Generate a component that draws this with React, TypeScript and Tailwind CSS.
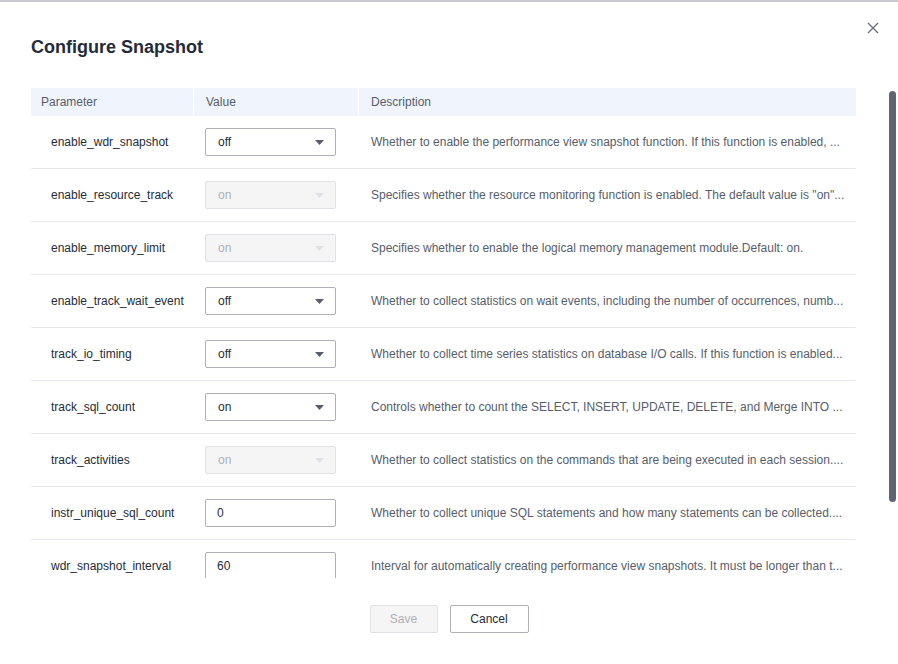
import React from 'react';

interface Param {
  name: string;
  kind: 'select' | 'input';
  value: string;
  disabled?: boolean;
  description: string;
}

const PARAMS: Param[] = [
  {
    name: 'enable_wdr_snapshot',
    kind: 'select',
    value: 'off',
    description: 'Whether to enable the performance view snapshot function. If this function is enabled, ...',
  },
  {
    name: 'enable_resource_track',
    kind: 'select',
    value: 'on',
    disabled: true,
    description: 'Specifies whether the resource monitoring function is enabled. The default value is "on"...',
  },
  {
    name: 'enable_memory_limit',
    kind: 'select',
    value: 'on',
    disabled: true,
    description: 'Specifies whether to enable the logical memory management module.Default: on.',
  },
  {
    name: 'enable_track_wait_event',
    kind: 'select',
    value: 'off',
    description: 'Whether to collect statistics on wait events, including the number of occurrences, numb...',
  },
  {
    name: 'track_io_timing',
    kind: 'select',
    value: 'off',
    description: 'Whether to collect time series statistics on database I/O calls. If this function is enabled...',
  },
  {
    name: 'track_sql_count',
    kind: 'select',
    value: 'on',
    description: 'Controls whether to count the SELECT, INSERT, UPDATE, DELETE, and Merge INTO ...',
  },
  {
    name: 'track_activities',
    kind: 'select',
    value: 'on',
    disabled: true,
    description: 'Whether to collect statistics on the commands that are being executed in each session....',
  },
  {
    name: 'instr_unique_sql_count',
    kind: 'input',
    value: '0',
    description: 'Whether to collect unique SQL statements and how many statements can be collected....',
  },
  {
    name: 'wdr_snapshot_interval',
    kind: 'input',
    value: '60',
    description: 'Interval for automatically creating performance view snapshots. It must be longer than t...',
  },
];

function Caret({ disabled }: { disabled?: boolean }) {
  return (
    <svg width="9" height="5" viewBox="0 0 9 5" className="shrink-0">
      <path d="M0 0 H9 L4.5 5 Z" fill={disabled ? '#dfe1e6' : '#575d6c'} />
    </svg>
  );
}

function ValueCell({ p }: { p: Param }) {
  if (p.kind === 'input') {
    return (
      <div className="flex h-[28px] w-[131px] items-center rounded-[2px] border border-[#adb0b8] bg-white px-[11px] text-[#252b3a]">
        {p.value}
      </div>
    );
  }
  return (
    <div
      className={
        p.disabled
          ? 'flex h-[28px] w-[131px] items-center justify-between rounded-[2px] border border-[#dfe1e6] bg-[#f5f5f6] pl-[12px] pr-[11px] text-[#adb0b8]'
          : 'flex h-[28px] w-[131px] items-center justify-between rounded-[2px] border border-[#adb0b8] bg-white pl-[12px] pr-[11px] text-[#252b3a]'
      }
    >
      <span>{p.value}</span>
      <Caret disabled={p.disabled} />
    </div>
  );
}

export default function App() {
  return (
    <div
      className="relative h-[664px] w-[898px] overflow-hidden border-t-2 border-[#c9cacd] bg-white text-[12px]"
      style={{ fontFamily: '"Liberation Sans", Arial, sans-serif' }}
    >
      {/* Close */}
      <button className="absolute right-[17px] top-[18px] p-[2px]">
        <svg width="12" height="12" viewBox="0 0 12 12">
          <path d="M1 1 L11 11 M11 1 L1 11" stroke="#6b6f7a" strokeWidth="1.4" />
        </svg>
      </button>

      <div className="pl-[31px] pr-[42px]">
        <h1 className="pt-[33px] text-[18px] font-bold leading-[24px] text-[#252b3a]">Configure Snapshot</h1>

        {/* Table */}
        <div className="mt-[29px] h-[490px] overflow-hidden">
          <div className="grid h-[28px] grid-cols-[163px_165px_1fr] bg-[#f0f4fc] text-[#575d6c]">
            <div className="flex items-center border-r border-white pl-[10px]">Parameter</div>
            <div className="flex items-center border-r border-white pl-[12px]">Value</div>
            <div className="flex items-center pl-[12px]">Description</div>
          </div>
          {PARAMS.map((p) => (
            <div
              key={p.name}
              className="grid h-[53px] grid-cols-[163px_165px_1fr] border-b border-[#e6e8ee] text-[#252b3a]"
            >
              <div className="flex items-center pl-[20px]">{p.name}</div>
              <div className="flex items-center pl-[11px]">
                <ValueCell p={p} />
              </div>
              <div className="flex min-w-0 items-center pl-[12px] text-[#575d6c]">
                <span className="whitespace-nowrap">{p.description}</span>
              </div>
            </div>
          ))}
        </div>

        {/* Footer */}
        <div className="mt-[27px] flex justify-center gap-[12px] pl-[11px]">
          <button
            disabled
            className="h-[28px] w-[68px] rounded-[2px] border border-[#dfe1e6] bg-[#f5f5f6] text-[12px] text-[#adb0b8]"
          >
            Save
          </button>
          <button className="h-[28px] w-[79px] rounded-[2px] border border-[#adb0b8] bg-white text-[12px] text-[#252b3a]">
            Cancel
          </button>
        </div>
      </div>

      {/* Scrollbar thumb */}
      <div className="absolute left-[889px] top-[89px] h-[411px] w-[7px] rounded-full bg-[#5f6373]" />
    </div>
  );
}
